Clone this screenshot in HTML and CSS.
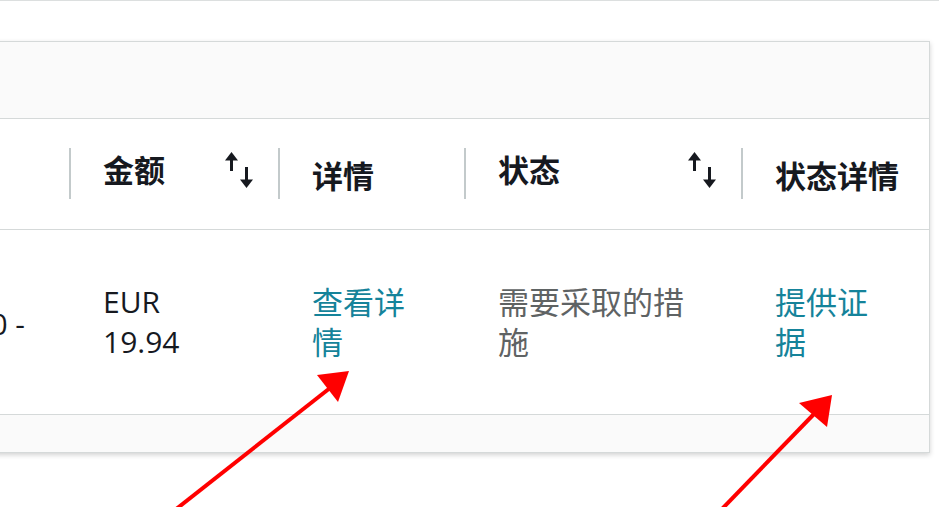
FILE: index.html
```html
<!DOCTYPE html>
<html lang="zh">
  <head>
    <meta charset="UTF-8" />
    <meta name="viewport" content="width=device-width, initial-scale=1.0" />
    <title>案例</title>
    <link rel="stylesheet" href="styles.css">
  </head>
  <body>
    <div class="page">
      <div class="panel">
        <div class="panel-toolbar"></div>
        <table class="cases">
          <colgroup>
            <col class="col-date" />
            <col class="col-amount" />
            <col class="col-detail" />
            <col class="col-status" />
            <col class="col-status-detail" />
          </colgroup>
          <thead>
            <tr>
              <th class="th-date"></th>
              <th>
                <button type="button" class="sort">
                  <span>金额</span>
                  <svg class="sort-icon" viewBox="0 0 28 36" width="28" height="36">
                    <path d="M6.5 4 V19" />
                    <polygon points="0,8.5 6.5,0 13,8.5" />
                    <path d="M21.5 15 V32" />
                    <polygon points="15,27.5 21.5,36 28,27.5" />
                  </svg>
                </button>
              </th>
              <th><span class="th-label">详情</span></th>
              <th>
                <button type="button" class="sort">
                  <span>状态</span>
                  <svg class="sort-icon" viewBox="0 0 28 36" width="28" height="36">
                    <path d="M6.5 4 V19" />
                    <polygon points="0,8.5 6.5,0 13,8.5" />
                    <path d="M21.5 15 V32" />
                    <polygon points="15,27.5 21.5,36 28,27.5" />
                  </svg>
                </button>
              </th>
              <th><span class="th-label">状态详情</span></th>
            </tr>
          </thead>
          <tbody>
            <tr>
              <td class="td-date">2023/10/10 -</td>
              <td class="amount">EUR 19.94</td>
              <td class="cjk"><a href="#">查看详情</a></td>
              <td class="cjk status">需要采取的措施</td>
              <td class="cjk"><a href="#">提供证据</a></td>
            </tr>
          </tbody>
        </table>
        <div class="panel-footer"></div>
      </div>

      <svg class="marks" viewBox="0 0 939 507" width="939" height="507">
        <line x1="175" y1="510" x2="330" y2="388" />
        <polygon points="317,375 349,371 338,402" />
        <line x1="721" y1="510" x2="814" y2="414" />
        <polygon points="799,403 832,395 827,427" />
      </svg>
    </div>
  </body>
</html>
```

FILE: styles.css
```css
* {
  box-sizing: border-box;
}
body {
  margin: 0;
  overflow: hidden;
  border-top: 1px solid #dcdfdf;
  background-color: #ffffff;
  font-family: "Open Sans", "Noto Sans CJK SC", sans-serif;
  color: #16191f;
}
.page {
  position: relative;
  height: 506px;
  padding-top: 40px;
}
.panel {
  width: 1110px;
  margin-left: -180px;
  border: 1px solid #d5d9d9;
  background-color: #ffffff;
  box-shadow: 0 2px 5px rgba(0, 0, 0, 0.18);
}
.panel-toolbar {
  height: 77px;
  background-color: #fafafa;
  border-bottom: 1px solid #d5d9d9;
}
.panel-footer {
  height: 37px;
  background-color: #fafafa;
}
.cases {
  width: 1108px;
  table-layout: fixed;
  border-collapse: separate;
  border-spacing: 0;
}
.col-date {
  width: 249px;
}
.col-amount {
  width: 209px;
}
.col-detail {
  width: 186px;
}
.col-status {
  width: 277px;
}
.col-status-detail {
  width: 187px;
}
.cases th {
  position: relative;
  height: 111px;
  padding: 0 26px 0 33px;
  border-bottom: 1px solid #d5d9d9;
  font-size: 31px;
  font-weight: 700;
  line-height: 40px;
  text-align: left;
  vertical-align: middle;
  white-space: nowrap;
}
.cases th + th::before {
  content: "";
  position: absolute;
  left: -1px;
  top: 29px;
  bottom: 30px;
  width: 2px;
  background-color: #c3cacb;
}
.th-label {
  display: block;
  padding-top: 4px;
}
.sort {
  display: flex;
  align-items: center;
  justify-content: space-between;
  width: 100%;
  padding: 0 0 8px 0;
  border: none;
  background: none;
  font: inherit;
  color: inherit;
  text-align: left;
}
.sort-icon {
  display: block;
  fill: #16191f;
  stroke: #16191f;
  stroke-width: 3;
}
.sort-icon polygon {
  stroke: none;
}
.cases td {
  height: 185px;
  padding: 0 50px 0 33px;
  border-bottom: 1px solid #d5d9d9;
  font-size: 30px;
  line-height: 40px;
  vertical-align: middle;
}
.cases td.cjk {
  font-size: 31px;
}
.cases td.td-date {
  padding: 4px 45px 0 0;
  text-align: right;
  white-space: nowrap;
}
.amount {
  color: #16191f;
}
.status {
  color: #5f6364;
}
.cases a {
  color: #15839a;
  text-decoration: none;
}
.marks {
  position: absolute;
  top: -1px;
  left: 0;
  pointer-events: none;
}
.marks line {
  stroke: #ff0000;
  stroke-width: 4;
}
.marks polygon {
  fill: #ff0000;
}
```
